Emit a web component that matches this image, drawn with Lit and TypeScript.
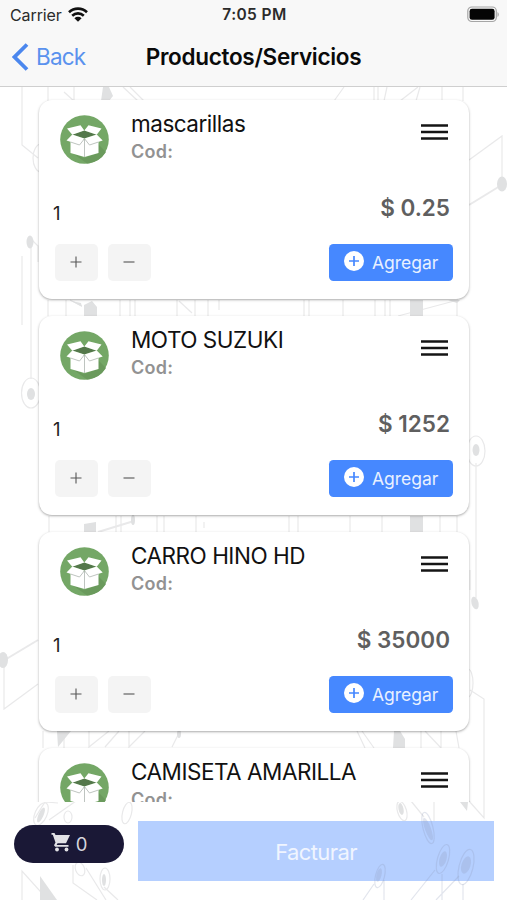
import { LitElement, html, svg, css } from "lit";
import { customElement, property } from "lit/decorators.js";

interface Product {
  name: string;
  price: string;
  qty: number;
}

const PRODUCTS: Product[] = [
  { name: "mascarillas", price: "$ 0.25", qty: 1 },
  { name: "MOTO SUZUKI", price: "$ 1252", qty: 1 },
  { name: "CARRO HINO HD", price: "$ 35000", qty: 1 },
  { name: "CAMISETA AMARILLA", price: "$ 12", qty: 1 },
];

/* Faint circuit lines behind the whole page. */
const circuit = svg`
  <g fill="none" stroke="#e9e9ea" stroke-width="1.2">
    <path d="M22 87V145L38 158M48 87V101M74 101V87M64 92l10 9M123 87l15 14M130 87l14 14"/>
    <path d="M334 101l10-14M374 87v14M378 87v14M387 87l-3 14M400 101l18-14M416 101l4-14M442 87v14M463 87v14"/>
    <ellipse cx="41" cy="158" rx="8" ry="14"/>
    <path d="M38 262V246L30 238M31 246V379M22 256V325"/>
    <ellipse cx="31" cy="393" rx="9.500" ry="15"/>
    <path d="M469 160L502 136V183"/>
    <path d="M469 205L500 186" stroke-width="2"/>
    <path d="M48 300v16M66 300v16M70 300l12 6M120 300v16M130 300v16M135 300v16M177 300v16M179 301l13 12M195 300v16M208 300v16M219 300v10"/>
    <path d="M304 300v16M309 300v16M343 300v16M375 300v16M385 300v16M390 300v16M398 316l60-16M457 300v16"/>
    <ellipse cx="476" cy="451" rx="9" ry="15"/>
    <path d="M476 463V598M470 590V570"/>
    <path d="M49 516v16M116 516v16M121 516v16M157 516v16M164 516v16M196 516v16M204 522v6"/>
    <path d="M98 532l36-11" stroke-width="2"/>
    <path d="M289 516v16M298 516v16M350 532v-16M382 516v16M440 516v16M457 516v16"/>
    <path d="M3 661L38 640" stroke-width="2"/>
    <path d="M4 664V709L38 684"/>
    <path d="M43 731v17M64 748v-17M89 731v16l20-16M105 747l14-16M129 731v16l16-16M172 747l8-16"/>
    <path d="M357 731l8 17M362 731l12 17M421 731v17M425 731l16 17v-17M456 731l3 17"/>
    <ellipse cx="468" cy="683" rx="5" ry="14"/>
    <path d="M470 690L484 699V818L469 801"/>
    <ellipse cx="41" cy="814" rx="6" ry="12" transform="rotate(24 41 814)"/>
    <path d="M35 818l10-16 13 1M49 820l27-19"/>
    <ellipse cx="68" cy="817" rx="4" ry="6"/>
    <ellipse cx="127" cy="813" rx="4.500" ry="11" transform="rotate(14 127 813)"/>
    <ellipse cx="80" cy="869" rx="4.500" ry="7" transform="rotate(-20 80 869)"/>
    <ellipse cx="105" cy="879" rx="5" ry="11"/>
    <path d="M22 900V871l26 29M73 865v18l24 17M86 868l20 32M104 887l14 13"/>
    <ellipse cx="402" cy="811" rx="4.500" ry="10" transform="rotate(-16 402 811)"/>
    <path d="M411 801l13 16M434 801V833"/>
  </g>
  <g fill="#e0e1e2">
    <path d="M103 87h6l4 9-4 5h-8z"/>
    <ellipse cx="30" cy="242" rx="3.500" ry="6.500"/>
    <ellipse cx="31" cy="394" rx="4" ry="6"/>
    <ellipse cx="502" cy="184" rx="5" ry="7.500"/>
    <path d="M84 316v-11l8-4 5 6v9zM71 301l10 2 1 4z"/>
    <path d="M410 300h13v16h-13zM448 300h12l-3 3z"/>
    <ellipse cx="476" cy="450" rx="3.500" ry="6"/>
    <ellipse cx="475" cy="603" rx="3.500" ry="6.500" transform="rotate(-15 475 603)"/>
    <path d="M84 524l12-2v10H84zM410 516h13v16h-13z"/>
    <ellipse cx="133" cy="520" rx="2" ry="5"/>
    <ellipse cx="3" cy="660" rx="5" ry="8"/>
    <path d="M57 731h14l-13 16zM394 731h6l5 8v9h-12zM460 802h8l-1 9z"/>
    <ellipse cx="41" cy="815" rx="2.500" ry="8" transform="rotate(24 41 815)"/>
    <ellipse cx="179" cy="734" rx="2" ry="4"/>
    <path d="M40 876l17 24H40z"/>
    <ellipse cx="401" cy="809" rx="2.500" ry="6" transform="rotate(-12 401 809)"/>
    <ellipse cx="104" cy="880" rx="2" ry="6"/>
  </g>`;

/* The part of the pattern that shows through the translucent button. */
const circuitEnd = svg`
  <g fill="none" stroke="#8e9cb8" stroke-opacity=".26" stroke-width="1.2">
    <ellipse cx="428" cy="828" rx="5" ry="16" transform="rotate(-14 428 828)"/>
    <ellipse cx="443" cy="859" rx="5.500" ry="15" transform="rotate(16 443 859)"/>
    <ellipse cx="466" cy="867" rx="7" ry="18" transform="rotate(14 466 867)"/>
    <ellipse cx="380" cy="876" rx="4.500" ry="12" transform="rotate(14 380 876)"/>
    <path d="M435 870L411 900M442 874V900M459 876L436 900M463 884V900M374 884l-11 16M384 880v20"/>
  </g>
  <g fill="#8e9cb8" fill-opacity=".26">
    <ellipse cx="428" cy="829" rx="3" ry="12" transform="rotate(-20 428 829)"/>
    <ellipse cx="443" cy="859" rx="3.500" ry="8" transform="rotate(16 443 859)"/>
    <ellipse cx="466" cy="865" rx="4.500" ry="9" transform="rotate(18 466 865)"/>
    <ellipse cx="379" cy="875" rx="2.500" ry="7" transform="rotate(14 379 875)"/>
  </g>`;

@customElement("product-card")
export class ProductCard extends LitElement {
  @property({ attribute: false }) product!: Product;

  static styles = css`
    :host {
      display: flex;
      flex-direction: column;
      flex: none;
      box-sizing: border-box;
      height: 199px;
      border-radius: 13px;
      background: #fff;
      box-shadow: 0 1px 2.5px rgba(0, 0, 0, 0.34);
      padding: 0 16px 0 14.500px;
    }
    .head {
      display: flex;
      align-items: flex-start;
      height: 92.500px;
    }
    .box {
      flex: none;
      width: 49px;
      height: 49px;
      margin: 15px 22px 0 7px;
    }
    .names {
      flex: 1;
      padding-top: 9.500px;
      white-space: nowrap;
    }
    .name {
      font-size: 22.500px;
      line-height: 28px;
      letter-spacing: -0.48px;
      color: #111;
    }
    .code {
      font-size: 18px;
      line-height: 28px;
      font-weight: 600;
      letter-spacing: 0.25px;
      color: #929292;
    }
    .menu {
      flex: none;
      width: 27px;
      height: 18px;
      margin: 23px 5px 0 0;
    }
    .values {
      display: flex;
      justify-content: space-between;
      height: 51px;
    }
    .qty {
      font-size: 18.500px;
      line-height: 40px;
      color: #222;
    }
    .price {
      padding-right: 3px;
      font-size: 22.500px;
      line-height: 30px;
      font-weight: 600;
      color: #5f5f5f;
    }
    .actions {
      display: flex;
      gap: 10px;
      padding-left: 1.5px;
    }
    .step {
      display: grid;
      place-items: center;
      width: 43px;
      height: 37px;
      border-radius: 5px;
      background: #f4f4f4;
    }
    .add {
      display: flex;
      align-items: center;
      gap: 8px;
      box-sizing: border-box;
      width: 124px;
      height: 37px;
      margin-left: auto;
      padding-left: 15px;
      border-radius: 4.500px;
      background: #4688ff;
      color: #e9f1ff;
      font-size: 17.500px;
      line-height: 37px;
    }
    .add svg {
      margin-bottom: 2px;
    }
  `;

  render() {
    const p = this.product;
    return html`
      <div class="head">
        <svg class="box" viewBox="0 0 49 49">
          <circle cx="24.500" cy="24.500" r="24.300" fill="#74a766" />
          <path d="M11 37l13 6 14-5v-9l8 8a24.300 24.300 0 0 1-19 11.500z" fill="#6a9a5c" />
          <path d="M12 19.500l12-4 12.500 4-12 4z" fill="#54784b" />
          <path d="M10.500 24.500h28V38l-14 4-14-4z" fill="#fff" />
          <path d="M7 13.500l13.500-3.200 3.800 5.200-12 4.200zM41.500 13.500L28.500 10.300l-4.200 5.200 12.400 4.200z" fill="#fff" />
          <path d="M12.300 19.500l12 4-4.800 6.300L6.500 25.500zM36.700 19.500l-12.400 4 5.200 6.300 13.200-4.300z" fill="#fff" />
          <path d="M10.500 27l9 3 5-6.300 5 6.300 9-3M24.500 24v18" fill="none" stroke="#adb5b0" stroke-width=".8" />
        </svg>
        <div class="names">
          <div class="name">${p.name}</div>
          <div class="code">Cod:</div>
        </div>
        <svg class="menu" viewBox="0 0 27 18">
          <path d="M0 2.500h27M0 9h27M0 15.500h27" stroke="#151515" stroke-width="2.300" />
        </svg>
      </div>
      <div class="values">
        <span class="qty">${p.qty}</span>
        <span class="price">${p.price}</span>
      </div>
      <div class="actions">
        <div class="step">
          <svg width="12" height="12" viewBox="0 0 12 12">
            <path d="M6 .5v11M.5 6h11" stroke="#555" stroke-width="1.100" />
          </svg>
        </div>
        <div class="step">
          <svg width="12" height="12" viewBox="0 0 12 12">
            <path d="M.5 6h11" stroke="#555" stroke-width="1.100" />
          </svg>
        </div>
        <div class="add">
          <svg width="20" height="20" viewBox="0 0 20 20">
            <circle cx="10" cy="10" r="10" fill="#fff" />
            <path d="M10 5v10M5 10h10" stroke="#4688ff" stroke-width="1.700" />
          </svg>
          <span>Agregar</span>
        </div>
      </div>
    `;
  }
}

@customElement("app-root")
export class AppRoot extends LitElement {
  static styles = css`
    :host {
      display: flex;
      flex-direction: column;
      position: relative;
      width: 507px;
      height: 900px;
      overflow: hidden;
      background: #fff;
      font-family: Inter, "Liberation Sans", sans-serif;
    }
    .art {
      position: absolute;
      inset: 0;
      width: 507px;
      height: 900px;
      pointer-events: none;
    }
    header {
      position: relative;
      flex: none;
      box-sizing: border-box;
      height: 87px;
      background: #f8f8f8;
      border-bottom: 1px solid #cfcfcf;
    }
    .status,
    .bar {
      display: grid;
      grid-template-columns: 1fr auto 1fr;
      align-items: center;
    }
    .status {
      height: 29px;
      padding: 0 8px 0 10px;
      font-size: 16px;
      color: #2b2b2b;
    }
    .carrier {
      display: flex;
      align-items: center;
      gap: 6px;
      letter-spacing: -0.1px;
    }
    .time {
      font-weight: 600;
      font-size: 15.500px;
      letter-spacing: 0.4px;
    }
    .battery {
      justify-self: end;
      margin-bottom: 1px;
    }
    .bar {
      height: 55px;
      padding: 0 12px;
    }
    .back {
      display: flex;
      align-items: center;
      gap: 7px;
      font-size: 22.500px;
      letter-spacing: -0.8px;
      color: #5a92ee;
    }
    .title {
      font-size: 22.500px;
      font-weight: 600;
      letter-spacing: -0.3px;
      color: #0a0a0a;
    }
    .list {
      position: relative;
      display: flex;
      flex-direction: column;
      gap: 17px;
      box-sizing: border-box;
      height: 715px;
      padding: 13px 38px 0 38.500px;
      overflow: hidden;
    }
    footer {
      position: relative;
      display: flex;
      align-items: flex-start;
      gap: 14px;
      height: 98px;
      padding: 0 13px 0 14px;
    }
    .cart {
      display: flex;
      align-items: center;
      justify-content: center;
      gap: 5px;
      width: 110px;
      height: 38px;
      margin-top: 22.500px;
      border-radius: 19px;
      background: #1a1836;
      color: #d5d5dc;
      font-size: 18.500px;
    }
    .cart svg {
      margin-bottom: 3px;
    }
    .invoice {
      flex: 1;
      height: 60.500px;
      margin-top: 18.500px;
      background: #b5cfff;
      color: #f0f5ff;
      font-size: 22px;
      line-height: 62px;
      letter-spacing: -0.6px;
      text-align: center;
    }
  `;

  render() {
    return html`
      <svg class="art" viewBox="0 0 507 900">${circuit}</svg>
      <header>
        <div class="status">
          <div class="carrier">
            <span>Carrier</span>
            <svg width="20" height="15" viewBox="0 0 20 15">
              <path d="M1 5.200a13 13 0 0 1 18 0M4.200 8.700a8.500 8.500 0 0 1 11.600 0" fill="none" stroke="#111" stroke-width="2.600" />
              <path d="M10 14.800L6.400 11.200a5.200 5.200 0 0 1 7.200 0z" fill="#111" />
            </svg>
          </div>
          <span class="time">7:05 PM</span>
          <svg class="battery" width="32" height="17" viewBox="0 0 32 17">
            <rect x=".8" y="1" width="28.500" height="14.500" rx="4" fill="none" stroke="#a6a6a6" stroke-width="1.200" />
            <rect x="2.600" y="2.800" width="25" height="11" rx="2.400" fill="#050505" />
            <path d="M30.500 6v5q1.300-.8 1.300-2.500t-1.300-2.500z" fill="#a6a6a6" />
          </svg>
        </div>
        <div class="bar">
          <div class="back">
            <svg width="17" height="28" viewBox="0 0 17 28">
              <path d="M15 1.500L2.500 14 15 26.500" fill="none" stroke="#4b87ee" stroke-width="3.800" />
            </svg>
            <span>Back</span>
          </div>
          <span class="title">Productos/Servicios</span>
        </div>
      </header>
      <main class="list">
        ${PRODUCTS.map((p) => html`<product-card .product=${p}></product-card>`)}
      </main>
      <footer>
        <div class="cart">
          <svg width="20" height="20" viewBox="0 0 20 20">
            <path d="M.5 1h3l1 2h14.500l-4 8.200H6.600L5.600 13H17.500v1.800H4.200L3 13.300l1.500-2.800L1.800 2.700H.5z" fill="#e2e2e6" />
            <circle cx="6" cy="17.500" r="1.900" fill="#e2e2e6" />
            <circle cx="15.500" cy="17.500" r="1.900" fill="#e2e2e6" />
          </svg>
          <span>0</span>
        </div>
        <div class="invoice">Facturar</div>
      </footer>
      <svg class="art" viewBox="0 0 507 900">${circuitEnd}</svg>
    `;
  }
}
